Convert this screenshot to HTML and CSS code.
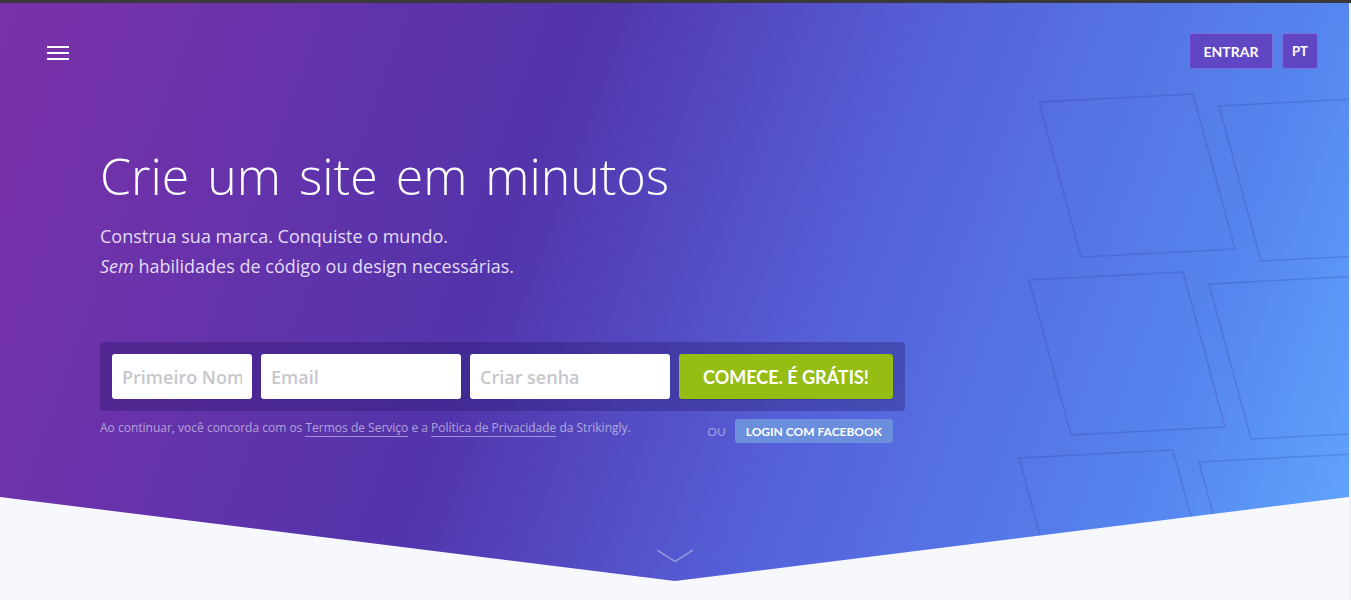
FILE: index.html
```html
<!DOCTYPE html>
<html lang="pt">
<head>
<meta charset="utf-8">
<title>Strikingly</title>
<link rel="stylesheet" href="styles.css">
</head>
<body>
<div class="topbar"></div>
<div class="page">
  <section class="hero">
    <svg class="shapes" width="1349" height="597" viewBox="0 0 1349 597" aria-hidden="true">
      <g fill="none" stroke="rgba(35,25,110,0.16)" stroke-width="1.5" stroke-linejoin="round">
        <polygon points="1039,99 1193,91 1235,246 1081,254"/>
        <polygon points="1219,103 1373,95 1415,250 1261,258"/>
        <polygon points="1029,277 1183,269 1225,424 1071,432"/>
        <polygon points="1209,281 1363,273 1405,428 1251,436"/>
        <polygon points="1019,455 1173,447 1215,602 1061,610"/>
        <polygon points="1199,459 1353,451 1395,606 1241,614"/>
      </g>
    </svg>
    <header class="nav">
      <button class="burger" aria-label="Menu"><span></span><span></span><span></span></button>
      <div class="nav-right">
        <a class="nav-btn">ENTRAR</a>
        <a class="nav-btn lang">PT</a>
      </div>
    </header>
    <div class="content">
      <h1 class="title">Crie um site em minutos</h1>
      <p class="sub">Construa sua marca. Conquiste o mundo.<br><em>Sem</em> habilidades de código ou design necessárias.</p>
      <form class="signup">
        <input class="field f-name" type="text" placeholder="Primeiro Nome">
        <input class="field f-email" type="text" placeholder="Email">
        <input class="field f-pass" type="password" placeholder="Criar senha">
        <button class="cta" type="button">COMECE. É GRÁTIS!</button>
      </form>
      <div class="below">
        <p class="terms">Ao continuar, você concorda com os <a>Termos de Serviço</a> e a <a>Política de Privacidade</a> da Strikingly.</p>
        <div class="fb-wrap">
          <span class="ou">OU</span>
          <a class="fb">LOGIN COM FACEBOOK</a>
        </div>
      </div>
    </div>
    <svg class="chevron" width="38" height="14" viewBox="0 0 38 14" aria-hidden="true">
      <polyline points="1,1 19,12.5 37,1" fill="none" stroke="rgba(255,255,255,0.35)" stroke-width="1.6"/>
    </svg>
  </section>
  <div class="edge"></div>
</div>
</body>
</html>
```

FILE: styles.css
```css
* { box-sizing: border-box; }
html, body { margin: 0; padding: 0; }
body {
  background: #f7f8fd;
  font-family: "Open Sans", "Noto Sans", sans-serif;
  height: 600px;
  overflow: hidden;
}
.topbar {
  height: 3px;
  background: #3a3a3a;
}
.page {
  display: flex;
  height: 597px;
}
.edge {
  width: 2px;
  background: #eff0f6;
}
.hero {
  position: relative;
  flex: 1;
  height: 597px;
  background: linear-gradient(110deg, #7b31a9 0%, #5234ab 38%, #5560d8 60%, #5585ef 85%, #62a8ff 100%);
  clip-path: polygon(0 0, 100% 0, 100% 494px, 675px 578px, 0 494px);
}
.shapes {
  position: absolute;
  top: 0;
  left: 0;
  pointer-events: none;
}
.nav {
  position: relative;
  display: flex;
  justify-content: space-between;
  align-items: flex-start;
  padding: 30px 31px 0 47px;
}
.burger {
  display: flex;
  flex-direction: column;
  gap: 4px;
  width: 22px;
  margin-top: 13px;
  padding: 0;
  border: 0;
  background: none;
}
.burger span {
  display: block;
  height: 2px;
  background: #fff;
}
.nav-right {
  display: flex;
  gap: 9px;
}
.nav-btn {
  display: flex;
  align-items: center;
  justify-content: center;
  height: 36px;
  width: 84px;
  background: #6046c2;
  border: 1px solid #7c6fe0;
  border-radius: 3px;
  color: #fff;
  font-family: Lato, sans-serif;
  font-weight: 700;
  font-size: 14px;
}
.nav-btn.lang {
  width: 36px;
  font-size: 13px;
}
.content {
  position: relative;
  padding-left: 100px;
}
.title {
  margin: 77px 0 0;
  font-weight: 300;
  font-size: 50px;
  line-height: 60px;
  letter-spacing: 0;
  word-spacing: 5px;
  color: #fff;
}
.sub {
  margin: 15px 0 0;
  font-size: 18px;
  line-height: 30px;
  color: #e3dcf6;
}
.sub em { font-style: italic; }
.signup {
  display: flex;
  gap: 9px;
  width: 805px;
  margin-top: 61px;
  padding: 12px;
  background: rgba(35, 20, 95, 0.32);
  border-radius: 4px;
}
.field {
  height: 45px;
  padding: 0 10px;
  border: 0;
  border-radius: 3px;
  background: #fff;
  font-family: "Open Sans", sans-serif;
  font-weight: 600;
  font-size: 18px;
  color: #555;
  outline: none;
}
.field::placeholder { color: #c6c6cd; }
.f-name { width: 140px; }
.f-email { width: 200px; }
.f-pass { width: 200px; }
.cta {
  width: 215px;
  height: 45px;
  border: 0;
  border-radius: 3px;
  background: #95bd13;
  color: #fff;
  font-family: Lato, sans-serif;
  font-weight: 700;
  font-size: 18px;
  box-shadow: 0 1px 0 rgba(0,0,0,0.15);
}
.below {
  display: flex;
  justify-content: space-between;
  align-items: flex-start;
  width: 805px;
  padding-right: 12px;
  margin-top: 8px;
}
.terms {
  margin: 0;
  font-size: 12px;
  line-height: 17px;
  color: rgba(255,255,255,0.55);
}
.terms a {
  text-decoration: none;
  border-bottom: 1px solid rgba(255,255,255,0.45);
}
.fb-wrap {
  display: flex;
  align-items: center;
  gap: 9px;
}
.ou {
  font-family: Lato, sans-serif;
  font-size: 12px;
  color: rgba(255,255,255,0.45);
  margin-top: 1px;
}
.fb {
  display: flex;
  align-items: center;
  height: 24px;
  padding: 0 11px;
  background: #6b8fdc;
  border-radius: 3px;
  color: #fff;
  font-family: Lato, sans-serif;
  font-weight: 700;
  font-size: 12px;
}
.chevron {
  position: absolute;
  left: 656px;
  top: 546px;
}
```
